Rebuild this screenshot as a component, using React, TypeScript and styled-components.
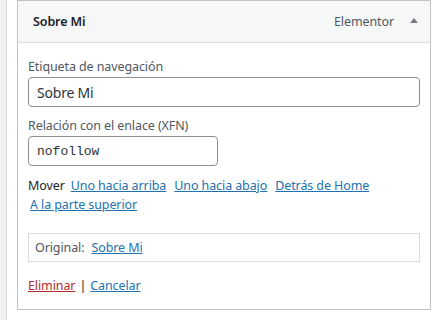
import React from "react";
import styled, { createGlobalStyle } from "styled-components";

const GlobalStyle = createGlobalStyle`
  html, body {
    margin: 0;
    padding: 0;
    background: #f0f0f1;
  }
  body {
    font-family: "Noto Sans", "Open Sans", sans-serif;
    font-size: 12.5px;
    letter-spacing: -0.1px;
    color: #1d2327;
  }
`;

const Page = styled.div`
  margin-left: 6px;
  border-left: 1px solid #dcdcde;
  background: #ffffff;
  height: 320px;
  padding: 0 14px 0 10px;
  box-sizing: border-box;
`;

const MenuItem = styled.div`
  width: 414px;
  border: 1px solid #c3c4c7;
  box-sizing: border-box;
  background: #ffffff;
`;

const Header = styled.div`
  display: flex;
  align-items: center;
  height: 42px;
  padding: 0 12px 0 15px;
  background: #f6f7f7;
  border-bottom: 1px solid #dcdcde;
  box-sizing: border-box;
`;

const Title = styled.span`
  flex: 1;
  font-weight: 600;
  color: #1d2327;
`;

const ItemType = styled.span`
  color: #50575e;
  margin-right: 16px;
`;

const Arrow = styled.span`
  width: 0;
  height: 0;
  border-left: 4px solid transparent;
  border-right: 4px solid transparent;
  border-bottom: 5px solid #787c82;
  margin-top: -2px;
`;

const Body = styled.div`
  padding: 15px 10px 0 10px;
  height: 266px;
  box-sizing: border-box;
`;

const Field = styled.div<{ $width?: number }>`
  display: flex;
  flex-direction: column;
  width: ${(p) => (p.$width ? `${p.$width}px` : "100%")};
  margin-bottom: 10px;
`;

const Label = styled.label`
  line-height: 18px;
  color: #50575e;
  margin-bottom: 1px;
`;

const Input = styled.input<{ $mono?: boolean }>`
  height: 30px;
  box-sizing: border-box;
  border: 1px solid #8c8f94;
  border-radius: 4px;
  padding: 0 8px;
  font-family: ${(p) =>
    p.$mono ? `"Liberation Mono", "DejaVu Sans Mono", monospace` : `"Noto Sans", sans-serif`};
  font-size: ${(p) => (p.$mono ? "13px" : "14px")};
  letter-spacing: ${(p) => (p.$mono ? "0" : "-0.2px")};
  color: #2c3338;
  background: #ffffff;
  outline: none;
`;

const MoveRow = styled.div`
  line-height: 19px;
`;

const MoveLabel = styled.span`
  color: #1d2327;
  margin-right: 6px;
`;

const Link = styled.a<{ $danger?: boolean; $indent?: number }>`
  color: ${(p) => (p.$danger ? "#b32d2e" : "#2271b1")};
  text-decoration: underline;
  cursor: pointer;
  margin-right: 8px;
  margin-left: ${(p) => p.$indent ?? 0}px;
`;

const Original = styled.div`
  margin-top: 19px;
  height: 29px;
  display: flex;
  align-items: center;
  padding: 0 6px;
  border: 1px solid #dcdcde;
  box-sizing: border-box;
  color: #50575e;
`;

const OriginalLink = styled(Link)`
  margin-left: 7px;
`;

const Actions = styled.div`
  margin-top: 14px;
  line-height: 19px;
`;

const Sep = styled.span`
  color: #1d2327;
  margin: 0 4px;
`;

const PlainLink = styled(Link)`
  margin-right: 0;
`;

export default function App() {
  return (
    <>
      <GlobalStyle />
      <Page>
        <MenuItem>
          <Header>
            <Title>Sobre Mi</Title>
            <ItemType>Elementor</ItemType>
            <Arrow />
          </Header>
          <Body>
            <Field>
              <Label>Etiqueta de navegación</Label>
              <Input defaultValue="Sobre Mi" />
            </Field>
            <Field $width={190}>
              <Label>Relación con el enlace (XFN)</Label>
              <Input $mono defaultValue="nofollow" />
            </Field>
            <MoveRow>
              <MoveLabel>Mover</MoveLabel>
              <Link>Uno hacia arriba</Link>
              <Link>Uno hacia abajo</Link>
              <Link>Detrás de Home</Link>
              <br />
              <Link $indent={2}>A la parte superior</Link>
            </MoveRow>
            <Original>
              Original:
              <OriginalLink>Sobre Mi</OriginalLink>
            </Original>
            <Actions>
              <PlainLink $danger>Eliminar</PlainLink>
              <Sep>|</Sep>
              <PlainLink>Cancelar</PlainLink>
            </Actions>
          </Body>
        </MenuItem>
      </Page>
    </>
  );
}
